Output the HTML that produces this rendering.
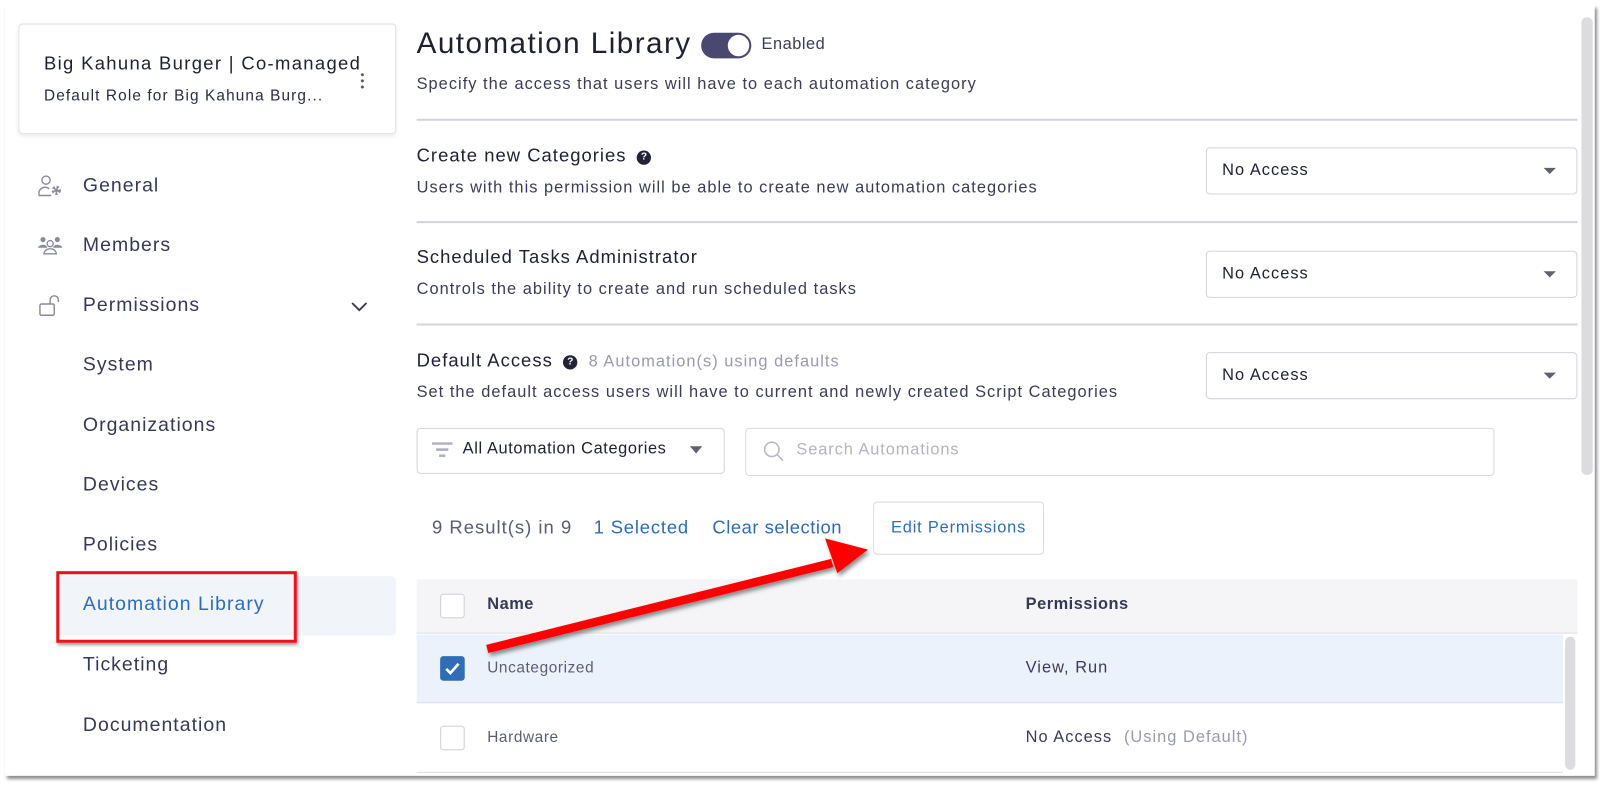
<!DOCTYPE html>
<html><head><meta charset="utf-8"><style>
*{box-sizing:border-box;margin:0;padding:0}
html,body{width:1605px;height:787px;overflow:hidden;background:#fff;font-family:"Liberation Sans",sans-serif;letter-spacing:1px;line-height:1.3}
#w{position:absolute;left:0;top:0;width:1568px;height:769px;transform:scale(1.0236);transform-origin:0 0}
.a{position:absolute;white-space:nowrap}
.frame{left:5px;top:5px;width:1553px;height:753px;background:#fff;box-shadow:2px 3px 3px rgba(0,0,0,.45)}
.card{left:18px;top:23px;width:369px;height:108px;border:1px solid #e2e2ea;border-radius:4px;box-shadow:0 2px 4px rgba(0,0,0,.08)}
.nav{left:81px;font-size:19px;color:#363954}
.t18{font-size:18px;color:#1f2030}
.d16{font-size:16px;color:#3a3c55}
.hr{left:407px;width:1134px;height:2px;background:#d3d3dc}
.dd{left:1178px;width:363px;height:46px;border:1px solid #d3d3dc;border-radius:4px;font-size:16px;color:#1f2030;padding:12px 0 0 15px}
.dd:after{content:"";position:absolute;right:20px;top:19px;border-left:6px solid transparent;border-right:6px solid transparent;border-top:6px solid #60606e}
.q{display:inline-block;width:14px;height:14px;border-radius:50%;background:#222336;color:#fff;font-size:10px;font-weight:bold;text-align:center;line-height:14px;vertical-align:2px;margin-left:10px;letter-spacing:0}
.cb{width:24px;height:24px;border:1px solid #cfcfd8;border-radius:3px;background:#fff}
</style></head><body><div id="w">
<div class="a frame"></div>
<div class="a card"></div>
<div class="a t18" style="left:43px;top:51px;letter-spacing:1.3px">Big Kahuna Burger | Co-managed</div>
<div class="a" style="left:43px;top:84px;font-size:15px;color:#2a2c40;letter-spacing:1.1px">Default Role for Big Kahuna Burg...</div>
<div class="a" style="left:352px;top:70px;width:4px;height:18px;background:radial-gradient(circle,#555 1.3px,transparent 1.6px) 0 0/4px 6px"></div>

<svg class="a" style="left:37px;top:171px" width="26" height="22" viewBox="0 0 26 22" fill="none" stroke="#8a8a98" stroke-width="1.4"><circle cx="8" cy="5" r="4"/><path d="M1 20v-2a6 6 0 0 1 10-4.5M1 20h12"/><circle cx="18" cy="15" r="3" stroke-width="3" stroke-dasharray="2 1.5"/><circle cx="18" cy="15" r="1" fill="#8a8a98"/></svg>
<div class="a nav" style="left:81px;top:170px">General</div>
<svg class="a" style="left:37px;top:230px" width="26" height="20" viewBox="0 0 26 20" fill="#8a8a98"><circle cx="5" cy="4" r="2.5"/><circle cx="19" cy="4" r="2.5"/><circle cx="12" cy="8" r="3" fill="none" stroke="#8a8a98" stroke-width="1.3"/><path d="M0 12a5 4 0 0 1 9-1v1H0zM15 11a5 4 0 0 1 9 1h-9z"/><path d="M6 18a6 5 0 0 1 12 0z" fill="none" stroke="#8a8a98" stroke-width="1.3"/></svg>
<div class="a nav" style="left:81px;top:228px">Members</div>
<svg class="a" style="left:37px;top:287px" width="26" height="24" viewBox="0 0 26 24" fill="none" stroke="#8a8a98" stroke-width="1.4"><rect x="2" y="10" width="14" height="11" rx="1.5"/><path d="M12 10V6a4 4 0 0 1 8 0v2"/></svg>
<div class="a nav" style="left:81px;top:287px">Permissions</div>
<svg class="a" style="left:342px;top:294px" width="18" height="12" viewBox="0 0 18 12" fill="none" stroke="#363954" stroke-width="1.8"><path d="M2 2l7 7 7-7"/></svg>
<div class="a nav" style="top:345px">System</div>
<div class="a nav" style="top:404px">Organizations</div>
<div class="a nav" style="top:462px">Devices</div>
<div class="a nav" style="top:521px">Policies</div>
<div class="a" style="left:55px;top:563px;width:332px;height:58px;background:#f1f4f9;border-radius:4px"></div>
<div class="a nav" style="top:579px;color:#2e6db4">Automation Library</div>
<div class="a" style="left:55px;top:558px;width:235px;height:70px;border:3px solid #e8141a;box-shadow:1px 2px 3px rgba(0,0,0,.4)"></div>
<div class="a nav" style="top:638px">Ticketing</div>
<div class="a nav" style="top:697px">Documentation</div>

<div class="a" style="left:407px;top:25px;font-size:29px;color:#1f2030;letter-spacing:1.4px">Automation Library</div>
<div class="a" style="left:685px;top:32px;width:49px;height:25px;border-radius:13px;background:#4a4870"><div class="a" style="right:2px;top:2px;width:21px;height:21px;border-radius:50%;background:#fff"></div></div>
<div class="a" style="left:744px;top:34px;font-size:16px;color:#3a3c55;letter-spacing:0.5px">Enabled</div>
<div class="a d16" style="left:407px;top:73px">Specify the access that users will have to each automation category</div>
<div class="a hr" style="top:116px"></div>

<div class="a t18" style="left:407px;top:141px">Create new Categories<span class="q">?</span></div>
<div class="a d16" style="left:407px;top:174px">Users with this permission will be able to create new automation categories</div>
<div class="a dd" style="top:144px">No Access</div>
<div class="a hr" style="top:216px"></div>
<div class="a t18" style="left:407px;top:240px">Scheduled Tasks Administrator</div>
<div class="a d16" style="left:407px;top:273px">Controls the ability to create and run scheduled tasks</div>
<div class="a dd" style="top:245px">No Access</div>
<div class="a hr" style="top:316px"></div>
<div class="a t18" style="left:407px;top:341px">Default Access<span class="q">?</span><span style="font-size:16px;color:#9a9aab;margin-left:11px">8 Automation(s) using defaults</span></div>
<div class="a d16" style="left:407px;top:374px">Set the default access users will have to current and newly created Script Categories</div>
<div class="a dd" style="top:344px">No Access</div>

<div class="a" style="left:407px;top:418px;width:301px;height:45px;border:1px solid #d3d3dc;border-radius:4px"></div>
<svg class="a" style="left:422px;top:432px" width="20" height="16" viewBox="0 0 20 16" fill="#b0b0bc"><rect x="0" y="0" width="20" height="2.5"/><rect x="4" y="6" width="12" height="2.5"/><rect x="7" y="12" width="6" height="2.5"/></svg>
<div class="a" style="left:452px;top:429px;font-size:16px;color:#1f2030;letter-spacing:0.6px">All Automation Categories</div>
<div class="a" style="left:674px;top:436px;border-left:6px solid transparent;border-right:6px solid transparent;border-top:7px solid #60606e"></div>
<div class="a" style="left:728px;top:418px;width:732px;height:47px;border:1px solid #d9d9e0;border-radius:4px"></div>
<svg class="a" style="left:745px;top:430px" width="22" height="22" viewBox="0 0 22 22" fill="none" stroke="#bbbbc6" stroke-width="1.6"><circle cx="9" cy="9" r="7"/><path d="M14 14l6 6"/></svg>
<div class="a" style="left:778px;top:430px;font-size:16px;color:#b4b4c0;letter-spacing:0.9px">Search Automations</div>

<div class="a" style="left:422px;top:504px;font-size:18px;color:#5a5c70">9 Result(s) in 9</div>
<div class="a" style="left:580px;top:504px;font-size:18px;color:#2e6db4;letter-spacing:0.8px">1 Selected</div>
<div class="a" style="left:696px;top:504px;font-size:18px;color:#2e6db4;letter-spacing:0.5px">Clear selection</div>
<div class="a" style="left:853px;top:490px;width:167px;height:52px;border:1px solid #d9d9e0;border-radius:4px;font-size:16px;color:#2e6db4;text-align:center;padding-top:15px;letter-spacing:0.8px">Edit Permissions</div>

<div class="a" style="left:407px;top:566px;width:1134px;height:53px;background:#f5f5f7;border-bottom:1px solid #e0e0e6"></div>
<div class="a cb" style="left:430px;top:580px"></div>
<div class="a" style="left:476px;top:581px;font-size:16px;font-weight:bold;color:#363954;letter-spacing:0.5px">Name</div>
<div class="a" style="left:1002px;top:581px;font-size:16px;font-weight:bold;color:#363954;letter-spacing:0.5px">Permissions</div>
<div class="a" style="left:407px;top:620px;width:1120px;height:67px;background:#ebf2fb;border-bottom:1px solid #dcdfe6"></div>
<div class="a" style="left:430px;top:641px;width:24px;height:24px;border-radius:3px;background:#2f6db5"><svg width="24" height="24" viewBox="0 0 24 24" fill="none" stroke="#fff" stroke-width="2.6"><path d="M6 12.5l4 4 8-9"/></svg></div>
<div class="a" style="left:476px;top:643px;font-size:15px;color:#5a5c70;letter-spacing:0.6px">Uncategorized</div>
<div class="a" style="left:1002px;top:643px;font-size:16px;color:#3a3c55">View, Run</div>
<div class="a cb" style="left:430px;top:709px"></div>
<div class="a" style="left:476px;top:711px;font-size:15px;color:#5a5c70;letter-spacing:0.6px">Hardware</div>
<div class="a" style="left:1002px;top:711px;font-size:16px;color:#3a3c55">No Access <span style="color:#9a9aab;margin-left:6px">(Using Default)</span></div>
<div class="a" style="left:407px;top:754px;width:1120px;height:1px;background:#dcdfe6"></div>
<div class="a" style="left:1529px;top:622px;width:10px;height:130px;background:#dcdcdf;border-radius:5px"></div>
<div class="a" style="left:1545px;top:17px;width:11px;height:447px;background:#dcdcdf;border-radius:5px"></div>

<svg class="a" style="left:0;top:0" width="1568" height="769" viewBox="0 0 1568 769"><defs><filter id="s"><feDropShadow dx="2" dy="3" stdDeviation="2" flood-opacity=".45"/></filter></defs><g filter="url(#s)" fill="#f00"><path d="M475 630L812 546L814 554L477 638Z"/><path d="M848 537L806 526L818 560Z"/></g></svg>
</div></body></html>
